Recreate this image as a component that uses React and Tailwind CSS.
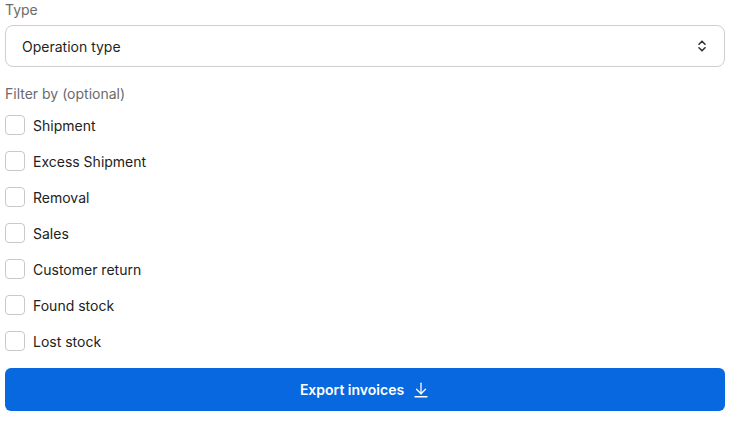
import React from "react";

const items = ["Shipment", "Excess Shipment", "Removal", "Sales", "Customer return", "Found stock", "Lost stock"];

export default function App() {
  return (
    <div className="w-[729px] h-[422px] bg-white pl-[5px] pr-[4px] text-[14px] text-[#222]" style={{ fontFamily: "Inter, 'Noto Sans', sans-serif" }}>
      <div className="h-[20px] leading-[20px] text-[#6b6b6b] text-[14px]">Type</div>
      <div className="mt-[5px] h-[42px] border border-[#cfcfcf] rounded-[8px] flex items-center justify-between pl-[16px] pr-[16px]">
        <span className="text-[14px] text-[#1f1f1f]">Operation type</span>
        <svg width="12" height="14" viewBox="0 0 12 14" fill="none" stroke="#333" strokeWidth="1.6" strokeLinecap="round" strokeLinejoin="round">
          <path d="M3 5.2 L6 2.2 L9 5.2" />
          <path d="M3 8.8 L6 11.8 L9 8.8" />
        </svg>
      </div>
      <div className="mt-[17px] h-[20px] leading-[20px] text-[#6b6b6b] text-[14px]">Filter by (optional)</div>
      <div className="mt-[3px] flex flex-col">
        {items.map((t) => (
          <label key={t} className="h-[36px] flex items-center gap-[8px]">
            <span className="w-[20px] h-[20px] rounded-[4px] border border-[#c9c9c9] bg-white" />
            <span className="text-[14px] text-[#222]">{t}</span>
          </label>
        ))}
      </div>
      <button className="mt-[9px] w-full h-[43px] rounded-[6px] bg-[#0768e0] text-white font-semibold text-[14px] flex items-center justify-center gap-[8px]">
        <span>Export invoices</span>
        <svg width="18" height="18" viewBox="0 0 24 24" fill="none" stroke="white" strokeWidth="1.7" strokeLinecap="round" strokeLinejoin="round">
          <path d="M12 3v14" />
          <path d="M6 11l6 6 6-6" />
          <path d="M4 21h16" />
        </svg>
      </button>
    </div>
  );
}
